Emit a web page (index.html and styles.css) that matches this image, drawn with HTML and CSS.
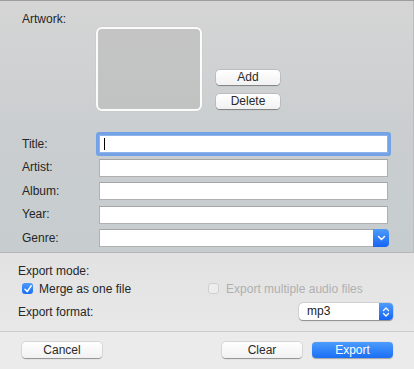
FILE: index.html
```html
<!DOCTYPE html>
<html>
<head>
<meta charset="utf-8">
<link rel="stylesheet" href="styles.css">
</head>
<body>
<div class="window">
  <section class="meta">
    <div class="artwork-label">Artwork:</div>
    <div class="artwork-row">
      <div class="artwork-box"></div>
      <div class="artwork-buttons">
        <button class="btn small">Add</button>
        <button class="btn small">Delete</button>
      </div>
    </div>
    <div class="fields">
      <label class="lbl">Title:</label>
      <div class="field focused"><span class="caret"></span></div>
      <label class="lbl">Artist:</label>
      <div class="field"></div>
      <label class="lbl">Album:</label>
      <div class="field"></div>
      <label class="lbl">Year:</label>
      <div class="field"></div>
      <label class="lbl">Genre:</label>
      <div class="field combo">
        <span class="combo-btn">
          <svg width="9" height="6" viewBox="0 0 9 6"><path d="M1.5 1.5 L4.5 4.5 L7.5 1.5" fill="none" stroke="#fff" stroke-width="1.5" stroke-linecap="round" stroke-linejoin="round"/></svg>
        </span>
      </div>
    </div>
  </section>
  <section class="export">
    <div class="export-label">Export mode:</div>
    <div class="check-row">
      <div class="check on">
        <span class="box"><svg width="10" height="10" viewBox="0 0 10 10"><path d="M2 5.3 L4.2 7.6 L8.2 1.8" fill="none" stroke="#fff" stroke-width="1.5" stroke-linecap="round" stroke-linejoin="round"/></svg></span>
        <span>Merge as one file</span>
      </div>
      <div class="check disabled">
        <span class="box"></span>
        <span>Export multiple audio files</span>
      </div>
    </div>
    <div class="format-row">
      <div class="export-label">Export format:</div>
      <div class="popup">
        <span class="popup-text">mp3</span>
        <span class="popup-btn">
          <svg width="8" height="12" viewBox="0 0 8 12"><path d="M1.5 4.5 L4 2 L6.5 4.5 M1.5 7.5 L4 10 L6.5 7.5" fill="none" stroke="#fff" stroke-width="1.3" stroke-linecap="round" stroke-linejoin="round"/></svg>
        </span>
      </div>
    </div>
  </section>
  <footer class="actions">
    <button class="btn wide">Cancel</button>
    <div class="right-actions">
      <button class="btn wide">Clear</button>
      <button class="btn wide primary">Export</button>
    </div>
  </footer>
</div>
</body>
</html>
```
FILE: styles.css
```css
html, body {
  margin: 0;
  padding: 0;
}
body {
  width: 414px;
  height: 369px;
  overflow: hidden;
  font-family: "Liberation Sans", Arial, sans-serif;
  font-size: 12px;
  color: #262626;
  background: #e9e9e9;
}
.window {
  width: 414px;
  height: 369px;
  display: flex;
  flex-direction: column;
  box-sizing: border-box;
  border-top: 1px solid #9d9d9d;
}
.meta {
  height: 252px;
  box-sizing: border-box;
  background: linear-gradient(180deg, #d5d5d5 0%, #c9cdcf 60%, #c7cdcf 100%);
  border-bottom: 1px solid #b4b6b7;
  padding: 11px 0 0 22px;
  border-right: 1px solid #bdbdbd;
}
.artwork-label {
  line-height: 14px;
}
.artwork-row {
  display: flex;
  align-items: flex-end;
  margin-top: 1px;
  margin-left: 74px;
}
.artwork-box {
  width: 102px;
  height: 80px;
  border: 2px solid #fbfbfb;
  border-radius: 6px;
  background: linear-gradient(180deg, #c4c4c4, #c1c3c3);
  box-shadow: 0 0 0 0.5px #c8c8c8;
}
.artwork-buttons {
  display: flex;
  flex-direction: column;
  gap: 9px;
  margin-left: 14px;
  margin-bottom: 2px;
}
.btn {
  font-family: "Liberation Sans", Arial, sans-serif;
  font-size: 12px;
  color: #2a2a2a;
  background: linear-gradient(180deg, #ffffff, #f1f1f1);
  border: none;
  border-radius: 4px;
  box-shadow: 0 0.5px 1px rgba(0,0,0,0.35), 0 0 0 0.5px rgba(0,0,0,0.12);
  padding: 0;
  height: 16px;
  line-height: 16px;
}
.btn.small {
  width: 64px;
  height: 15px;
  line-height: 15px;
}
.fields {
  display: grid;
  grid-template-columns: 77px 289px;
  row-gap: 5.5px;
  margin-top: 24px;
}
.lbl {
  display: flex;
  align-items: center;
  height: 17px;
}
.field {
  height: 18px;
  box-sizing: border-box;
  background: #fff;
  border: 1px solid #b0b0b0;
  border-top-color: #a5a5a5;
  position: relative;
}
.field.focused {
  box-shadow: 0 0 0 3px #73a3e6;
  border-color: #8fb3e8;
  border-radius: 1px;
}
.caret {
  position: absolute;
  left: 4px;
  top: 2px;
  width: 1px;
  height: 12px;
  background: #000;
}
.combo {
  border-right: none;
  border-radius: 0 4px 4px 0;
}
.combo-btn {
  position: absolute;
  right: -1px;
  top: -1px;
  width: 16px;
  height: 18px;
  border-radius: 0 4px 4px 0;
  background: linear-gradient(180deg, #4e9cfb, #1565f4);
  display: flex;
  align-items: center;
  justify-content: center;
}
.export {
  flex: 1;
  background: linear-gradient(180deg, #e2e2e2, #e8e8e8);
  border-bottom: 1px solid #cdcdcd;
  padding: 11px 0 0 18px;
  display: flex;
  flex-direction: column;
}
.export-label {
  line-height: 14px;
}
.check-row {
  display: flex;
  margin-top: 4px;
  margin-left: 4px;
  height: 13px;
  align-items: center;
}
.check {
  display: flex;
  align-items: center;
  gap: 6px;
}
.check.on {
  gap: 6px;
}
.check.disabled {
  margin-left: 77px;
  gap: 7px;
  color: #b0b0b0;
}
.box {
  width: 11px;
  height: 11px;
  border-radius: 3px;
  box-sizing: border-box;
  display: flex;
  align-items: center;
  justify-content: center;
}
.check.on .box {
  background: linear-gradient(180deg, #4b9bfb, #1a6ef5);
}
.check.disabled .box {
  background: #ededed;
  border: 1px solid #cfcfcf;
}
.format-row {
  display: flex;
  align-items: center;
  justify-content: space-between;
  margin-top: 8px;
  padding-right: 21px;
}
.popup {
  width: 94px;
  height: 17px;
  border-radius: 4px;
  background: #fff;
  box-shadow: 0 0.5px 1px rgba(0,0,0,0.35), 0 0 0 0.5px rgba(0,0,0,0.12);
  display: flex;
  justify-content: space-between;
  overflow: hidden;
}
.popup-text {
  padding-left: 8px;
  line-height: 17px;
  color: #222;
}
.popup-btn {
  width: 14px;
  height: 17px;
  background: linear-gradient(180deg, #4e9cfb, #1565f4);
  display: flex;
  align-items: center;
  justify-content: center;
}
.actions {
  height: 37px;
  box-sizing: border-box;
  background: #ebebeb;
  padding: 10px 21px 0 22px;
  display: flex;
  justify-content: space-between;
  align-items: flex-start;
}
.btn.wide {
  width: 80px;
}
.right-actions {
  display: flex;
  gap: 10px;
}
.btn.primary {
  width: 81px;
  color: #fff;
  background: linear-gradient(180deg, #4b9cfb, #1a6ff5);
  box-shadow: 0 0.5px 1px rgba(0,0,0,0.3);
}
```
